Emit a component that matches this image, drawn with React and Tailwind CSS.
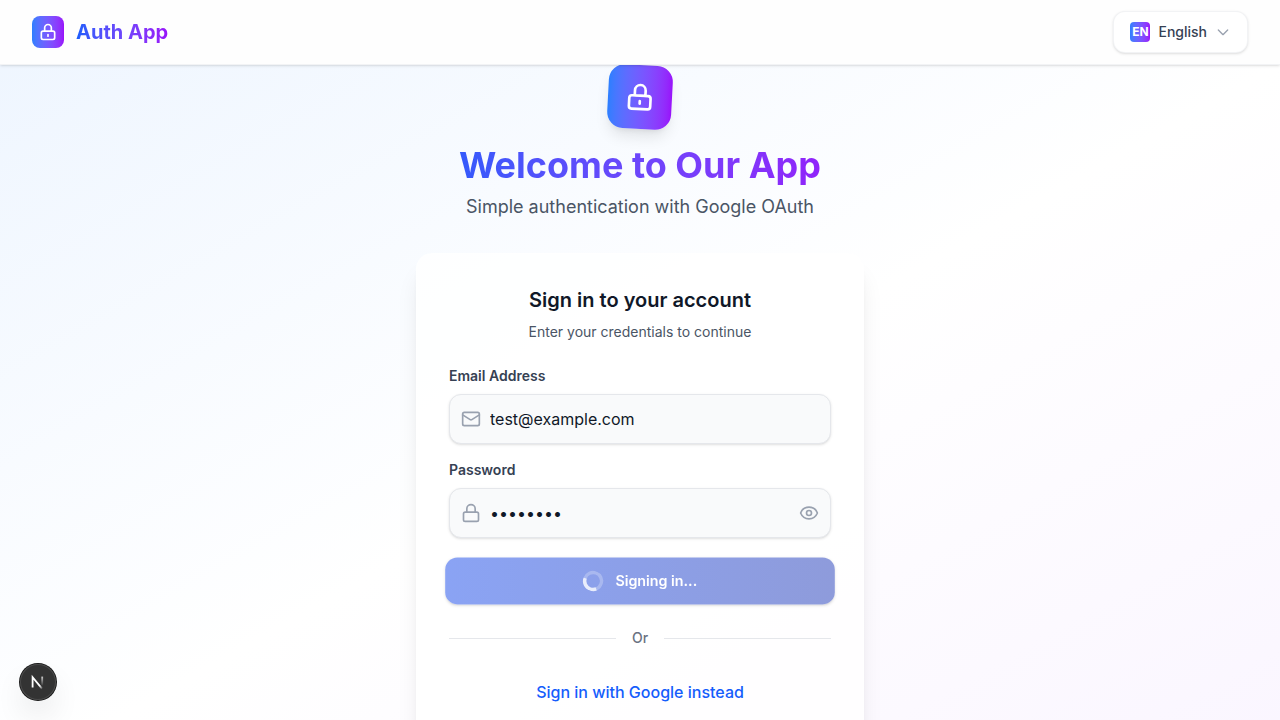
import { Eye, Lock, Mail } from "lucide-react";

function KeyholeLock({ className }) {
  return (
    <svg className={className} viewBox="0 0 24 24" fill="none" stroke="currentColor" strokeWidth="2" strokeLinecap="round" strokeLinejoin="round" aria-hidden="true">
      <path d="M12 15v2m-6 4h12a2 2 0 002-2v-6a2 2 0 00-2-2H6a2 2 0 00-2 2v6a2 2 0 002 2zm10-10V7a4 4 0 00-8 0v4h8z" />
    </svg>
  );
}

function Header() {
  return (
    <header className="sticky top-0 z-10 flex h-[65px] items-center justify-between border-b border-gray-200/50 bg-[#fefefe] px-8 shadow-sm">
      <div className="flex items-center gap-3">
        <div className="flex size-8 items-center justify-center rounded-lg bg-linear-to-r from-blue-500 to-purple-600">
          <KeyholeLock className="size-5 text-white" />
        </div>
        <span className="bg-linear-to-r from-blue-600 to-purple-600 bg-clip-text text-xl font-bold text-transparent">Auth App</span>
      </div>
      <button type="button" className="flex items-center gap-2 rounded-xl border border-gray-200/50 bg-white px-4 py-2.5 text-sm font-medium text-gray-700 shadow-sm">
        <span className="flex size-5 items-center justify-center rounded-sm bg-linear-to-r from-blue-500 to-purple-600 text-xs font-bold text-white">EN</span>
        <span>English</span>
        <svg className="size-4 text-gray-400" viewBox="0 0 24 24" fill="none" stroke="currentColor" strokeWidth="2" strokeLinecap="round" strokeLinejoin="round" aria-hidden="true">
          <path d="M19 9l-7 7-7-7" />
        </svg>
      </button>
    </header>
  );
}

function Field({ id, label, icon: Icon, children, ...props }) {
  return (
    <div>
      <label htmlFor={id} className="block text-sm font-semibold text-gray-700">{label}</label>
      <div className="relative mt-2">
        <Icon className="pointer-events-none absolute top-1/2 left-3 size-5 -translate-y-1/2 text-gray-400" aria-hidden="true" />
        <input
          id={id}
          className="block h-[50px] w-full rounded-xl border border-gray-200 bg-gray-50 px-10 text-base text-gray-900 shadow-sm outline-none"
          {...props}
        />
        {children}
      </div>
    </div>
  );
}

function SignInCard() {
  return (
    <section className="w-full max-w-md rounded-2xl border border-white/20 bg-white/80 p-8 shadow-xl">
      <div className="text-center">
        <h2 className="text-xl font-semibold text-gray-900">Sign in to your account</h2>
        <p className="mt-2 text-sm text-gray-600">Enter your credentials to continue</p>
      </div>
      <form className="mt-6 flex flex-col gap-4" onSubmit={(e) => e.preventDefault()}>
        <Field id="email" label="Email Address" icon={Mail} type="email" defaultValue="test@example.com" />
        <Field id="password" label="Password" icon={Lock} type="password" defaultValue="password">
          <button type="button" aria-label="Show password" className="absolute top-1/2 right-3 -translate-y-1/2 text-gray-400">
            <Eye className="size-5" aria-hidden="true" />
          </button>
        </Field>
        <button type="submit" disabled className="mt-1 flex h-[46px] scale-102 items-center justify-center gap-3 rounded-xl bg-linear-to-r from-[#8aa3f4] to-[#8e9bdb] text-sm font-semibold text-white shadow-sm">
          <svg className="size-5 -rotate-70" viewBox="0 0 24 24" fill="none" aria-hidden="true">
            <circle cx="12" cy="12" r="10" stroke="currentColor" strokeWidth="4" opacity="0.25" />
            <path fill="currentColor" opacity="0.75" d="M4 12a8 8 0 018-8V0C5.373 0 0 5.373 0 12h4zm2 5.291A7.962 7.962 0 014 12H0c0 3.042 1.135 5.824 3 7.938l3-2.647z" />
          </svg>
          Signing in...
        </button>
      </form>
      <div className="mt-6 flex items-center gap-4 text-sm font-medium text-gray-500">
        <span className="h-px flex-1 bg-gray-200" />
        Or
        <span className="h-px flex-1 bg-gray-200" />
      </div>
      <div className="mt-8 text-center">
        <a href="#google" className="font-medium text-blue-600">Sign in with Google instead</a>
      </div>
    </section>
  );
}

function DevBadge() {
  return (
    <button type="button" aria-label="Open developer tools" className="fixed bottom-5 left-5 z-20 flex size-9 items-center justify-center rounded-full bg-[#333333] shadow-[0_0_0_1px_#171717,inset_0_0_0_1px_#4b4b4b,0_16px_32px_-8px_rgba(0,0,0,0.24)]">
      <svg className="size-5" viewBox="0 0 20 20" fill="none" aria-hidden="true">
        <defs>
          <linearGradient id="diagonal" x1="7" y1="8" x2="15" y2="17" gradientUnits="userSpaceOnUse">
            <stop offset="0.6" stopColor="white" />
            <stop offset="1" stopColor="white" stopOpacity="0" />
          </linearGradient>
          <linearGradient id="stem" x1="14" y1="4" x2="14" y2="14" gradientUnits="userSpaceOnUse">
            <stop stopColor="white" stopOpacity="0.8" />
            <stop offset="1" stopColor="white" stopOpacity="0" />
          </linearGradient>
        </defs>
        <path d="M4.6 15.6V5.2L14 16.6" stroke="url(#diagonal)" strokeWidth="1.8" />
        <path d="M14.2 4.6v9" stroke="url(#stem)" strokeWidth="1.8" />
      </svg>
    </button>
  );
}

export default function App() {
  return (
    <div className="font-['Inter',sans-serif]">
      <Header />
      <main className="flex min-h-screen flex-col items-center bg-linear-to-br from-blue-50 via-white to-purple-50">
        <div className="flex size-16 rotate-3 items-center justify-center rounded-2xl bg-linear-to-r from-blue-500 to-purple-600 shadow-lg">
          <KeyholeLock className="size-8 text-white" />
        </div>
        <h1 className="mt-4 w-full max-w-md bg-linear-to-r from-blue-600 to-purple-600 bg-clip-text text-center text-4xl font-bold text-transparent">Welcome to Our App</h1>
        <p className="mt-2 mb-8 text-lg text-gray-600">Simple authentication with Google OAuth</p>
        <SignInCard />
      </main>
      <DevBadge />
    </div>
  );
}
